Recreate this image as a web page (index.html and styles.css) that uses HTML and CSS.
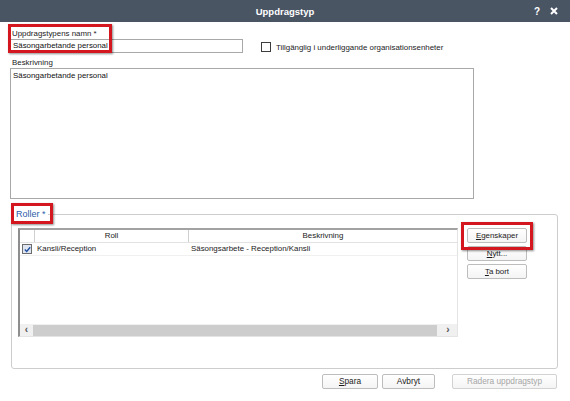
FILE: index.html
```html
<!DOCTYPE html>
<html lang="sv">
<head>
<meta charset="utf-8">
<title>Uppdragstyp</title>
<link rel="stylesheet" href="styles.css">
</head>
<body>
<div class="window">
  <div class="titlebar">
    <div></div>
    <div class="title">Uppdragstyp</div>
    <div class="tb-icons"><span class="tb-help">?</span><svg class="tb-close" width="8" height="8" viewBox="0 0 8 8"><path d="M1 1L7 7M7 1L1 7" stroke="#fff" stroke-width="2"/></svg></div>
  </div>
  <div class="content">
    <div class="row1">
      <div class="namefield">
        <div class="lbl">Uppdragstypens namn *</div>
        <div class="input">Säsongarbetande personal</div>
        <div class="hl hl-name"></div>
      </div>
      <div class="chk"><span class="box"></span><span>Tillgänglig i underliggande organisationsenheter</span></div>
    </div>
    <div class="lbl lbl-desc">Beskrivning</div>
    <div class="textarea">Säsongarbetande personal</div>
    <div class="group">
      <div class="legend">Roller *</div>
      <div class="hl hl-legend"></div>
      <div class="grid">
        <div class="thead">
          <div class="th th-chk"></div>
          <div class="th">Roll</div>
          <div class="th th-last">Beskrivning</div>
        </div>
        <div class="trow">
          <div class="td td-chk"><span class="cbx"><svg width="7" height="7" viewBox="0 0 7 7"><path d="M0.8 3.6L2.7 5.4L6.2 1.2" fill="none" stroke="#1f4f9e" stroke-width="1.4"/></svg></span></div>
          <div class="td">Kansli/Reception</div>
          <div class="td">Säsongsarbete - Reception/Kansli</div>
        </div>
        <div class="hscroll">
          <span class="arr">&#8249;</span>
          <span class="thumb"></span>
          <span class="arr">&#8250;</span>
        </div>
      </div>
      <div class="sidebtns">
        <div class="btn-wrap">
          <div class="btn"><u>E</u>genskaper</div>
          <div class="hl hl-btn"></div>
        </div>
        <div class="btn"><u>N</u>ytt...</div>
        <div class="btn"><u>T</u>a bort</div>
      </div>
    </div>
    <div class="footer">
      <div class="btn fbtn b-spara"><u>S</u>para</div>
      <div class="btn fbtn b-avbryt">Avbryt</div>
      <div class="btn fbtn b-radera disabled">Radera uppdragstyp</div>
    </div>
  </div>
</div>
</body>
</html>
```

FILE: styles.css
```css
* { box-sizing: border-box; }
html, body { margin: 0; padding: 0; }
body {
  width: 570px;
  height: 401px;
  overflow: hidden;
  background: #ffffff;
  font-family: "Liberation Sans", Arial, sans-serif;
  font-size: 7.9px;
  color: #1b1b1b;
}
.window { display: flex; flex-direction: column; height: 401px; }

.titlebar {
  height: 22px;
  background: #4a5564;
  color: #fff;
  display: grid;
  grid-template-columns: 1fr auto 1fr;
  align-items: center;
}
.title { font-weight: bold; font-size: 9.5px; }
.tb-icons {
  display: flex;
  justify-content: flex-end;
  align-items: center;
  gap: 10px;
  padding-right: 12px;
}
.tb-help { font-weight: bold; font-size: 10px; }
.tb-close { display: block; }

.content { padding: 0 12px 0 10px; display: flex; flex-direction: column; }

.row1 { display: flex; align-items: flex-end; gap: 18px; margin-top: 6px; }
.namefield { position: relative; width: 233px; }
.lbl { height: 11px; line-height: 11px; padding-left: 2px; }
.input {
  height: 14px;
  border: 1px solid #a8a8a8;
  line-height: 12px;
  padding-left: 2px;
  color: #111;
}
.chk { display: flex; align-items: center; gap: 5px; height: 14px; margin-bottom: -1px; }
.box { width: 10px; height: 10px; border: 1px solid #3c3c3c; background: #fff; }

.lbl-desc { margin-top: 4px; }
.textarea {
  width: 464px;
  height: 131px;
  border: 1px solid #a8a8a8;
  padding: 2px 2px;
  line-height: 10px;
  color: #111;
}

.group {
  position: relative;
  margin-top: 15px;
  margin-left: 1px;
  height: 155px;
  border: 1px solid #cdcdcd;
  border-radius: 3px;
  padding: 13px 0 0 6px;
  display: flex;
  align-items: flex-start;
  gap: 9px;
}
.legend {
  position: absolute;
  left: 2px;
  top: -6px;
  padding: 0 2px;
  background: #fff;
  color: #2b5ca8;
  font-size: 9px;
  line-height: 10px;
}

.grid {
  width: 440px;
  height: 109px;
  border-top: 2px solid #a2a2a2;
  border-left: 2px solid #8e8e8e;
  border-right: 1px solid #e4e4e4;
  border-bottom: 1px solid #e4e4e4;
  display: flex;
  flex-direction: column;
}
.thead, .trow { display: grid; grid-template-columns: 15px 154px 1fr; }
.thead { height: 13px; border-bottom: 1px solid #e2e2e2; }
.th {
  text-align: center;
  line-height: 12px;
  border-right: 1px solid #cfcfcf;
}
.th-last { border-right: none; }
.trow { height: 13px; border-bottom: 1px solid #f0f0f0; }
.td { line-height: 12px; padding-left: 2px; white-space: nowrap; }
.td-chk { padding-left: 2px; display: flex; align-items: center; }
.cbx {
  width: 10px;
  height: 10px;
  border: 1px solid #6d6d6d;
  background: #dfe6f2;
  display: flex;
  align-items: center;
  justify-content: center;
}
.cbx svg { display: block; }

.hscroll {
  margin-top: auto;
  height: 12px;
  background: #f0f0f0;
  display: flex;
  align-items: center;
}
.arr { width: 13px; text-align: center; font-size: 10px; font-weight: bold; color: #505050; line-height: 12px; }
.thumb { flex: 1; height: 11px; background: #cdcdcd; margin: 0 2px 0 0; }
.hscroll .arr:last-child { width: 18px; }

.sidebtns { display: flex; flex-direction: column; gap: 3px; width: 60px; }
.btn-wrap { position: relative; }
.btn {
  height: 15px;
  border: 1px solid #bdbdbd;
  border-radius: 2px;
  background: linear-gradient(#ffffff, #f4f4f4);
  text-align: center;
  line-height: 13px;
  color: #1b1b1b;
}
.btn u { text-decoration-thickness: 1px; text-underline-offset: 1px; }

.footer {
  display: flex;
  justify-content: flex-end;
  margin-top: 5px;
  padding-right: 1px;
}
.fbtn { height: 15px; font-size: 8.3px; }
.b-spara { width: 56px; }
.b-avbryt { width: 53px; margin-left: 4px; }
.b-radera { width: 105px; margin-left: 17px; }
.disabled { color: #a6a6a6; border-color: #d2d2d2; }

.hl {
  position: absolute;
  border: 3px solid #d4161e;
  box-shadow: 1px 1px 2px rgba(0,0,0,0.45);
  pointer-events: none;
}
.hl-name { left: -2px; top: -4px; width: 104px; height: 29px; }
.hl-legend { left: -1px; top: -12px; width: 42px; height: 21px; }
.hl-btn { left: -6px; top: -6px; width: 72px; height: 28px; }
```
